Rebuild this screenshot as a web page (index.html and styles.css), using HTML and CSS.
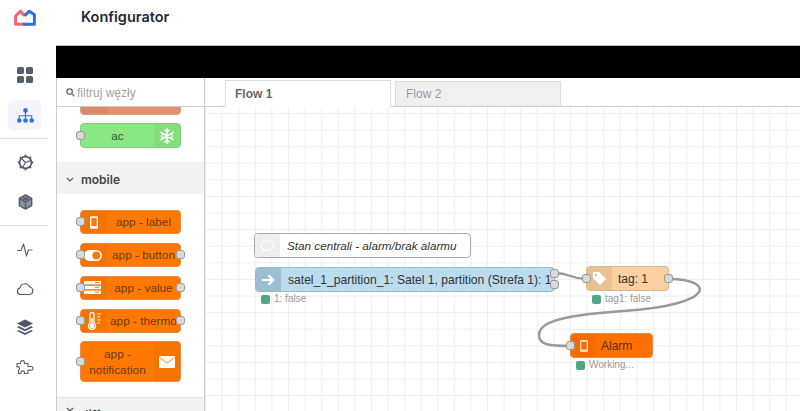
FILE: index.html
```html
<!DOCTYPE html>
<html lang="pl">
<head>
<meta charset="utf-8">
<title>Konfigurator</title>
<link rel="stylesheet" href="styles.css">
</head>
<body>
<div class="app">
  <aside class="rail">
    <div class="logo">
      <svg width="22" height="17" viewBox="0 0 22 17" fill="none" stroke-width="3" stroke-linejoin="round">
        <path d="M13 15.300H1.600V7L6.500 2.200l4 4.600" stroke="#f4656f"/>
        <path d="M9 15.300H20.400V5.800L15.300 2.200 10.500 6.800" stroke="#2f6fe0"/>
      </svg>
    </div>
    <div class="rail-group rail-first">
      <div class="rail-item">
        <svg width="16" height="16" viewBox="0 0 16 16" fill="#565d6e"><rect x="0" y="0" width="7" height="7" rx="1.600"/><rect x="9" y="0" width="7" height="7" rx="1.600"/><rect x="0" y="9" width="7" height="7" rx="1.600"/><rect x="9" y="9" width="7" height="7" rx="1.600"/></svg>
      </div>
      <div class="rail-item active">
        <svg width="17" height="15" viewBox="0 0 17 15" fill="#2f6fe0"><circle cx="8.500" cy="2.400" r="2.300"/><circle cx="2.300" cy="12.500" r="2.300"/><circle cx="8.500" cy="12.500" r="2.300"/><circle cx="14.700" cy="12.500" r="2.300"/><path d="M8.500 4v6M2.300 11V7.800h12.400V11" fill="none" stroke="#2f6fe0" stroke-width="1.100"/></svg>
      </div>
    </div>
    <hr class="rail-rule">
    <div class="rail-group">
      <div class="rail-item">
        <svg width="17" height="17" viewBox="0 0 18 18" fill="none" stroke="#565d6e" stroke-width="1.800"><circle cx="9" cy="9" r="6.300"/><path d="M9 .8v2.400M9 14.800v2.400M.8 9h2.400M14.800 9h2.400M3.200 3.200l1.700 1.700M13.100 13.100l1.700 1.700M3.200 14.800l1.700-1.700M13.100 4.900l1.700-1.700" stroke-width="2.200"/><path d="M9 9l5.500-2M9 9l-3 5M9 9L4.500 4.500" stroke-width="1.200"/></svg>
      </div>
      <div class="rail-item">
        <svg width="17" height="18" viewBox="0 0 18 18" fill="none" stroke="#565d6e" stroke-width="1.600" stroke-linejoin="round"><path d="M9 1.500l6.500 3.700v7.600L9 16.500l-6.500-3.700V5.200z" fill="#8d93a1"/><path d="M2.500 5.200L9 9l6.500-3.800M9 9v7.500M5.500 3.300L12 7.200M12.500 3.300L6 7.200"/></svg>
      </div>
    </div>
    <hr class="rail-rule rail-rule-b">
    <div class="rail-group">
      <div class="rail-item tight">
        <svg width="18" height="16" viewBox="0 0 18 16" fill="none" stroke="#565d6e" stroke-width="1.100" stroke-linejoin="round"><path d="M1 8.500h4L7.500 2l3 12 2-6h4"/></svg>
      </div>
      <div class="rail-item tight">
        <svg width="18" height="15" viewBox="0 0 18 15" fill="none" stroke="#565d6e" stroke-width="1.200" stroke-linejoin="round"><path d="M4.500 13.500a3.400 3.400 0 0 1-.5-6.700A5 5 0 0 1 13.600 6a3.800 3.800 0 0 1 0 7.500z"/></svg>
      </div>
      <div class="rail-item tight">
        <svg width="18" height="17" viewBox="0 0 18 17" fill="#4f5669"><path d="M9 .5l8 4-8 4-8-4z"/><path d="M2.800 7.100L9 10.200l6.200-3.100L17 8.300l-8 4-8-4z"/><path d="M2.800 10.900L9 14l6.200-3.100 1.800 1.200-8 4-8-4z"/></svg>
      </div>
      <div class="rail-item tight">
        <svg width="18" height="17" viewBox="0 0 18 17" fill="none" stroke="#565d6e" stroke-width="1.100" stroke-linejoin="round"><path d="M1 5.500h3.700a2 2 0 1 1 3.600 0H12v3h2.200a2 2 0 1 1 0 3.600H12v3.400H8.300a1.800 1.800 0 1 0-3.200 0H2.500V12.200a1.800 1.800 0 1 0-1.500-3.300z"/></svg>
      </div>
    </div>
  </aside>

  <header class="topbar">Konfigurator</header>
  <div class="blackbar"></div>

  <section class="palette">
    <div class="filter">
      <svg width="9" height="9" viewBox="0 0 10 10" fill="none" stroke="#666" stroke-width="1.400"><circle cx="4" cy="4" r="3"/><path d="M6.300 6.300L9.200 9.200"/></svg>
      <span>filtruj węzły</span>
    </div>
    <div class="palette-list">
      <div class="pal-group pal-group-top">
        <div class="pnode salmon"><span class="picon"></span><span class="plabel"></span></div>
        <div class="pnode green">
          <span class="port port-in"></span>
          <span class="plabel">ac</span>
          <span class="picon picon-right">
            <svg width="16" height="16" viewBox="0 0 16 16" fill="none" stroke="#fff" stroke-width="1.500" stroke-linecap="round"><path d="M8 .8v14.400M1.800 4.400l12.400 7.200M1.800 11.600l12.400-7.200"/><path d="M5.800 2L8 4.200 10.200 2M5.800 14L8 11.800l2.200 2.200M2.300 7.200L4.900 6.200M2.300 8.800l2.600 1M13.700 7.200L11.100 6.200M13.700 8.800l-2.600 1" stroke-width="1.200"/></svg>
          </span>
        </div>
      </div>
      <div class="pal-head">
        <svg width="8" height="5" viewBox="0 0 8 5" fill="none" stroke="#555" stroke-width="1.100"><path d="M1 1l3 3 3-3"/></svg>
        <span>mobile</span>
      </div>
      <div class="pal-group">
        <div class="pnode orange">
          <span class="port port-in"></span>
          <span class="picon">
            <svg width="8" height="13" viewBox="0 0 9 14"><rect width="9" height="14" rx="1.500" fill="#fff"/><rect x="1.500" y="2" width="6" height="9" fill="#ff7a00"/></svg>
          </span>
          <span class="plabel">app - label</span>
        </div>
        <div class="pnode orange">
          <span class="port port-in"></span>
          <span class="port port-out"></span>
          <span class="picon">
            <svg class="toggle" width="18" height="11" viewBox="0 0 18 11"><rect width="18" height="11" rx="5.500" fill="#fff"/><circle cx="12.300" cy="5.500" r="4" fill="#ff7a00"/></svg>
          </span>
          <span class="plabel">app - button</span>
        </div>
        <div class="pnode orange">
          <span class="port port-in"></span>
          <span class="port port-out"></span>
          <span class="picon">
            <svg class="server" width="17" height="13" viewBox="0 0 17 13" fill="#fff"><rect width="17" height="3.400"/><rect y="4.800" width="17" height="3.400"/><rect y="9.600" width="17" height="3.400"/><rect x="11" y="1" width="4" height="1" fill="#ff7a00"/><rect x="11" y="5.800" width="4" height="1" fill="#ff7a00"/><rect x="11" y="10.600" width="4" height="1" fill="#ff7a00"/></svg>
          </span>
          <span class="plabel">app - value</span>
        </div>
        <div class="pnode orange">
          <span class="port port-in"></span>
          <span class="port port-out"></span>
          <span class="picon">
            <svg width="15" height="18" viewBox="0 0 15 18" fill="none" stroke="#fff" stroke-width="1.300"><path d="M3 2.500a2 2 0 0 1 4 0v8.600a3.500 3.500 0 1 1-4 0z"/><circle cx="5" cy="14" r="1.700" fill="#fff"/><path d="M5 6v7" stroke-width="1.500"/><path d="M10 2h4M10 5h3M10 8h4M10 11h3" stroke-width=".9"/></svg>
          </span>
          <span class="plabel">app - thermo</span>
        </div>
        <div class="pnode orange tall">
          <span class="port port-in"></span>
          <span class="plabel">app -<br>notification</span>
          <span class="picon picon-right">
            <svg width="16" height="12" viewBox="0 0 16 12"><rect width="16" height="12" rx="1" fill="#fff"/><path d="M.5 1.500L8 7l7.500-5.500" fill="none" stroke="#ff8a20" stroke-width="1"/></svg>
          </span>
        </div>
      </div>
      <div class="pal-head pal-head-last">
        <svg width="8" height="5" viewBox="0 0 8 5" fill="none" stroke="#555" stroke-width="1.100"><path d="M1 1l3 3 3-3"/></svg>
        <span>diff</span>
      </div>
    </div>
  </section>

  <section class="workspace">
    <nav class="tabs">
      <div class="tab tab-on">Flow 1</div>
      <div class="tab">Flow 2</div>
    </nav>
    <div class="canvas">
      <svg class="wires" width="595" height="303" viewBox="0 0 595 303" fill="none" stroke="#999" stroke-width="2.400">
        <path d="M350 166C365 166 366 172 381 172"/>
        <path d="M464 172C510 172 512 198 418 204C345 209 334 218 334 228C334 238 345 239 365 239"/>
      </svg>

      <div class="cnode comment">
        <span class="cicon">
          <svg width="15" height="12" viewBox="0 0 15 12" fill="none" stroke="#fff" stroke-width="1.200"><ellipse cx="7.500" cy="5.500" rx="6.500" ry="4.500"/><path d="M4 9l-1 2.500 3.500-1.800"/></svg>
        </span>
        <span class="ctext">Stan centrali - alarm/brak alarmu</span>
      </div>

      <div class="cnode satel">
        <span class="cicon">
          <svg width="13" height="12" viewBox="0 0 14 12" fill="none" stroke="#fff" stroke-width="2.400"><path d="M0 6h11M7 1l5 5-5 5"/></svg>
        </span>
        <span class="ctext">satel_1_partition_1: Satel 1, partition (Strefa 1): 1</span>
        <span class="port port-o1"></span>
        <span class="port port-o2"></span>
      </div>
      <div class="cstatus st-satel"><i></i>1: false</div>

      <div class="cnode tag">
        <span class="port port-in"></span>
        <span class="port port-out"></span>
        <span class="cicon">
          <svg width="15" height="15" viewBox="0 0 15 15" fill="#fff"><path d="M1 1h6l7 7-6 6-7-7z"/><circle cx="4" cy="4" r="1.200" fill="#e8b988"/></svg>
        </span>
        <span class="ctext">tag: 1</span>
      </div>
      <div class="cstatus st-tag"><i></i>tag1: false</div>

      <div class="cnode alarm">
        <span class="port port-in"></span>
        <span class="cicon">
          <svg width="8" height="12" viewBox="0 0 8 12"><rect width="8" height="12" rx="1.300" fill="#ffd9b0"/><rect x="1.400" y="1.800" width="5.200" height="7.600" fill="#f26a00"/></svg>
        </span>
        <span class="ctext">Alarm</span>
      </div>
      <div class="cstatus st-alarm"><i></i>Working...</div>
    </div>
  </section>
</div>
</body>
</html>
```
FILE: styles.css
```css
* { box-sizing: border-box; }
html, body { margin: 0; height: 100%; overflow: hidden; background: #fff; }
body { font-family: "Liberation Sans", Arial, sans-serif; }

.app {
  display: grid;
  grid-template-columns: 56px 149px 1fr;
  grid-template-rows: 45px 33px 1fr;
  height: 411px;
  width: 800px;
}

/* Left rail */
.rail { grid-column: 1; grid-row: 1 / 4; width: 56px; overflow: hidden; }
.logo { height: 30px; width: 50px; padding-top: 9px; display: flex; justify-content: center; }
.rail-first { margin-top: 25px; }
.rail-group { width: 50px; }
.rail-item { height: 40px; display: flex; align-items: center; justify-content: center; }
.rail-item.tight { height: 39px; }
.rail-item.active { position: relative; }
.rail-item.active::before {
  content: "";
  position: absolute;
  left: 8px; top: 5px; width: 33px; height: 30px;
  background: #f3f5fa;
  border-radius: 5px;
}
.rail-item.active svg { position: relative; }
.rail-rule { width: 48px; height: 1px; margin: 3px 0 3px; border: 0; background: #dcdcdc; }
.rail-rule-b { margin-bottom: 4px; }

/* Top */
.topbar {
  grid-column: 2 / 4; grid-row: 1;
  padding: 8px 0 0 25px;
  font: 600 14.500px/18px Inter, sans-serif;
  color: #23283a;
}
.blackbar { grid-column: 2 / 4; grid-row: 2; background: #000; border-top: 1px solid #bbb; }

/* Palette */
.palette {
  grid-column: 2; grid-row: 3;
  border-left: 1px solid #ccc;
  border-right: 1px solid #ccc;
  overflow: hidden;
  display: flex;
  flex-direction: column;
  min-height: 0;
}
.filter {
  height: 29px;
  flex: none;
  border-bottom: 1px solid #ccc;
  display: flex;
  align-items: center;
  gap: 2px;
  padding-left: 9px;
  padding-top: 1px;
  font: 12px "Liberation Sans", sans-serif;
  color: #a2a2a2;
}
.palette-list { flex: 1; overflow: hidden; }
.pal-group { padding: 16px 0 15px 23px; display: flex; flex-direction: column; gap: 8.300px; }
.pal-group-top { margin-top: -16px; padding-top: 0; padding-bottom: 14px; }
.pal-head {
  height: 32px;
  background: #f3f3f3;
  display: flex;
  align-items: center;
  gap: 7px;
  padding-left: 9px;
  padding-top: 4px;
  font: 600 12px Inter, sans-serif;
  color: #444;
}
.pal-head-last { border-top: 1px solid #e4e4e4; align-items: flex-start; padding-top: 9px; }

.pnode {
  position: relative;
  width: 101px;
  height: 24.600px;
  border-radius: 4px;
  display: flex;
  align-items: center;
  font-size: 11.800px;
  flex: none;
}
.pnode.tall { height: 41px; }
.orange { background: #ff7900; border: 1px solid #ec8a3f; color: #6e3a12; }
.green { background: #8ae882; border: 1px solid #7fcf78; color: #35553a; }
.salmon { background: #e48f70; border: 1px solid #e0a088; height: 24px; }
.picon {
  flex: none;
  width: 26px;
  height: 100%;
  display: flex;
  align-items: center;
  justify-content: center;
  background: rgba(0, 0, 0, .04);
  border-radius: 3px 0 0 3px;
}
.picon-right { border-radius: 0 3px 3px 0; }
.plabel { flex: 1; text-align: center; line-height: 16px; white-space: nowrap; }
.tall .plabel { line-height: 16px; }
.toggle, .server { margin-left: -3px; }

.port {
  position: absolute;
  width: 9px;
  height: 9px;
  border-radius: 3px;
  background: #d9d9d9;
  border: 1px solid #999;
}
.port-in { left: -5px; top: 50%; margin-top: -5px; }
.port-out { right: -5px; top: 50%; margin-top: -5px; }

/* Workspace */
.workspace { grid-column: 3; grid-row: 3; display: flex; flex-direction: column; min-width: 0; min-height: 0; }
.tabs {
  height: 29px;
  flex: none;
  display: flex;
  gap: 4px;
  align-items: flex-end;
  padding-left: 20px;
  border-bottom: 1px solid #ccc;
}
.tab {
  width: 166px;
  height: 26px;
  margin-bottom: -1px;
  border: 1px solid #ddd;
  border-bottom-color: #ccc;
  background: #f0f0f0;
  color: #9a9a9a;
  font-size: 12px;
  line-height: 25px;
  padding-left: 10px;
}
.tab-on {
  height: 27px;
  padding-left: 9px;
  background: #fff;
  border-bottom-color: #fff;
  color: #666;
  font-weight: 700;
  line-height: 26px;
}

.canvas {
  position: relative;
  flex: 1;
  overflow: hidden;
  background-color: #fff;
  background-image:
    linear-gradient(#eee 1px, transparent 1px),
    linear-gradient(90deg, #eee 1px, transparent 1px);
  background-size: 16.600px 16.600px;
  background-position: 0 6px;
}
.wires { position: absolute; left: 0; top: 0; }

.cnode {
  position: absolute;
  height: 25px;
  border-radius: 4px;
  display: flex;
  align-items: center;
  font-size: 12px;
  color: #333;
}
.cicon {
  flex: none;
  width: 25px;
  height: 100%;
  display: flex;
  align-items: center;
  justify-content: center;
  border-radius: 3px 0 0 3px;
  background: rgba(0, 0, 0, .06);
}
.ctext { padding-left: 7px; white-space: nowrap; }

.comment { left: 49px; top: 126px; width: 217px; background: #fff; border: 1px solid #aaa; }
.comment .cicon { background: #eee; }
.comment .ctext { font-style: italic; font-size: 11.700px; padding-left: 7px; }

.satel { left: 50px; top: 160px; width: 300px; background: #bbdcee; border: 1px solid #9cb9ca; }
.satel .cicon { background: #9dbfd3; }
.satel .ctext { font-size: 12.100px; padding-left: 7px; }
.port-o1 { right: -5px; top: 1px; }
.port-o2 { right: -5px; top: 12px; }

.tag { left: 381px; top: 159px; width: 83px; background: #fdd0a2; border: 1px solid #d9b48c; }
.tag .cicon { background: #e8c195; }
.tag .ctext { padding-left: 6px; }

.alarm { left: 365px; top: 226px; width: 83px; background: #ff7000; border: 1px solid #ea8a48; color: #5f2c08; }
.alarm .cicon { background: rgba(0, 0, 0, .04); }
.alarm .ctext { padding-left: 5px; }

.cstatus {
  position: absolute;
  display: flex;
  align-items: center;
  gap: 4px;
  font-size: 10px;
  line-height: 12px;
  color: #9a9a9a;
}
.cstatus i { width: 9px; height: 9px; border-radius: 2px; background: #4fa883; }
.st-satel { left: 56px; top: 186px; }
.st-tag { left: 387px; top: 186px; }
.st-alarm { left: 371px; top: 252px; }
```
